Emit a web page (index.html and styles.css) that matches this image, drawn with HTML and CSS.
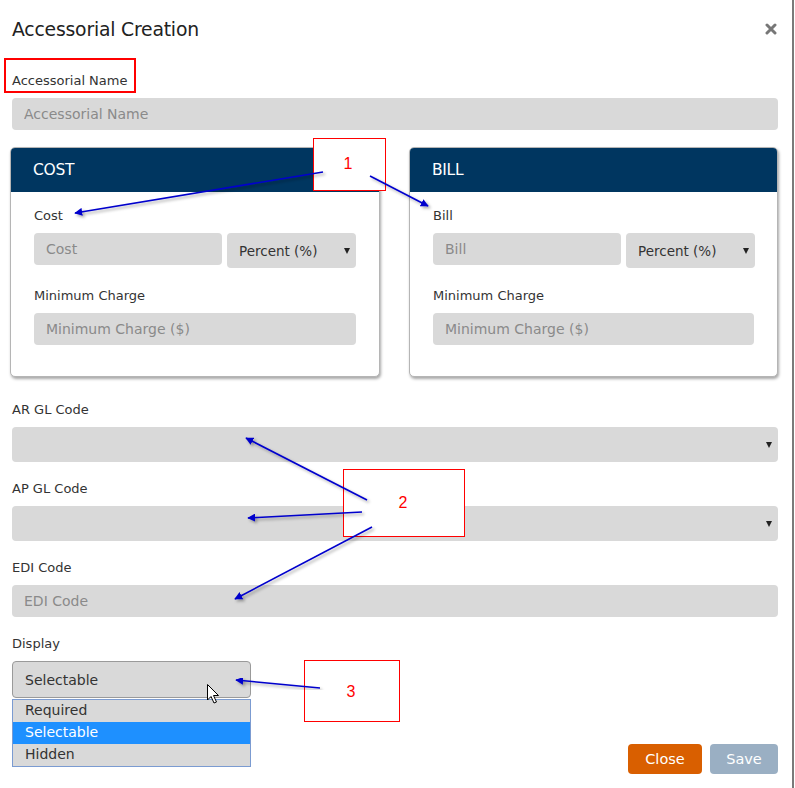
FILE: index.html
```html
<!DOCTYPE html>
<html lang="en">
<head>
  <meta charset="UTF-8" />
  <meta name="viewport" content="width=device-width, initial-scale=1.0"/>
  <title>Accessorial Creation</title>
  <link rel="stylesheet" href="styles.css">
</head>
<body>

  <div class="modal">
    <div class="modal-header">
      <h2 class="modal-title">Accessorial Creation</h2>
      <svg class="close-x" width="12" height="12" viewBox="0 0 12 12">
        <path d="M2 2 L10 10 M10 2 L2 10" stroke="#777" stroke-width="3" stroke-linecap="round"/>
      </svg>
    </div>

    <label class="label">Accessorial Name</label>
    <input class="input" type="text" placeholder="Accessorial Name">

    <!-- cost / bill panels -->
    <div class="panels">
      <div class="panel">
        <div class="panel-head">COST</div>
        <div class="panel-body">
          <label class="label">Cost</label>
          <div class="pair">
            <input class="input" type="text" placeholder="Cost">
            <div class="select small">Percent (%)</div>
          </div>
          <label class="label gap">Minimum Charge</label>
          <input class="input" type="text" placeholder="Minimum Charge ($)">
        </div>
      </div>
      <div class="panel">
        <div class="panel-head">BILL</div>
        <div class="panel-body">
          <label class="label">Bill</label>
          <div class="pair">
            <input class="input" type="text" placeholder="Bill">
            <div class="select small">Percent (%)</div>
          </div>
          <label class="label gap">Minimum Charge</label>
          <input class="input" type="text" placeholder="Minimum Charge ($)">
        </div>
      </div>
    </div>

    <label class="label first">AR GL Code</label>
    <div class="select"></div>

    <label class="label gap">AP GL Code</label>
    <div class="select"></div>

    <label class="label gap">EDI Code</label>
    <input class="input" type="text" placeholder="EDI Code">

    <label class="label gap">Display</label>
    <div class="display-wrap">
      <div class="display-select">Selectable</div>
      <ul class="dropdown">
        <li>Required</li>
        <li class="active">Selectable</li>
        <li>Hidden</li>
      </ul>
    </div>

    <div class="footer">
      <button class="btn btn-close">Close</button>
      <button class="btn btn-save">Save</button>
    </div>

    <!-- annotation layer drawn over the screenshot -->
    <svg class="notes" width="795" height="788" viewBox="0 0 795 788">
      <defs>
        <marker id="head" viewBox="0 0 10 10" refX="9" refY="5" markerWidth="5" markerHeight="5" orient="auto">
          <path d="M0 0 L10 5 L0 10 z" fill="#0000cc"/>
        </marker>
        <filter id="shade" x="-20%" y="-20%" width="140%" height="140%">
          <feDropShadow dx="2" dy="2" stdDeviation="1.5" flood-color="#000" flood-opacity="0.35"/>
        </filter>
      </defs>

      <rect x="5" y="59" width="130" height="33" fill="none" stroke="#f00" stroke-width="2"/>

      <rect x="313.5" y="138.5" width="72" height="52" fill="#fff" stroke="#f00"/>
      <text x="348" y="169" class="num">1</text>
      <g stroke="#0000cc" stroke-width="1.6" fill="none" marker-end="url(#head)" filter="url(#shade)">
        <line x1="323" y1="172" x2="75" y2="213"/>
        <line x1="370" y1="176" x2="428" y2="206"/>
      </g>

      <rect x="343.5" y="469.5" width="121" height="67" fill="#fff" stroke="#f00"/>
      <text x="403" y="508" class="num">2</text>
      <g stroke="#0000cc" stroke-width="1.6" fill="none" marker-end="url(#head)" filter="url(#shade)">
        <line x1="367" y1="500" x2="246" y2="438"/>
        <line x1="362" y1="512" x2="248" y2="518"/>
        <line x1="372" y1="527" x2="235" y2="599"/>
      </g>

      <rect x="304.5" y="660.5" width="95" height="61" fill="#fff" stroke="#f00"/>
      <text x="351" y="697" class="num">3</text>
      <g stroke="#0000cc" stroke-width="1.6" fill="none" marker-end="url(#head)" filter="url(#shade)">
        <line x1="320" y1="688" x2="236" y2="680"/>
      </g>

      <!-- mouse pointer -->
      <path d="M207.5 684.5 L207.5 700 L211 696.5 L214 703 L216.5 702 L213.5 695.5 L218.5 695.5 Z" fill="#fff" stroke="#000" stroke-width="1"/>
    </svg>
  </div>

</body>
</html>
```

FILE: styles.css
```css
body {
  margin: 0;
  background: #fff;
  font-family: 'DejaVu Sans', 'Open Sans', sans-serif;
  color: #333;
}

.modal {
  position: relative;
  width: 794px;
  height: 788px;
  box-sizing: border-box;
  padding: 0 14px 0 12px;
  border-right: 2px solid #7a7a7a;
  overflow: hidden;
}

.modal-header {
  display: flex;
  justify-content: space-between;
  align-items: center;
  padding-top: 17px;
  height: 24px;
}

.modal-title {
  margin: 0;
  font-size: 18.8px;
  font-weight: normal;
  color: #222;
  letter-spacing: -0.2px;
}

.close-x {
  margin-right: 1px;
}

.label {
  display: block;
  font-size: 13px;
  line-height: 18px;
  color: #333;
  margin: 31px 0 8px;
}

.label.gap {
  margin-top: 18px;
}

.label.first {
  margin-top: 24px;
}

.input {
  display: block;
  width: 100%;
  height: 32px;
  box-sizing: border-box;
  border: none;
  border-radius: 4px;
  background: #d9d9d9;
  padding: 0 12px;
  font-family: inherit;
  font-size: 14px;
  color: #333;
  outline: none;
}

.input::placeholder {
  color: #8a8a8a;
}

.select {
  position: relative;
  height: 35px;
  box-sizing: border-box;
  border-radius: 4px;
  background: #d9d9d9;
  padding: 0 20px 0 12px;
  font-size: 13.5px;
  line-height: 37px;
  color: #333;
}

.select::after {
  content: "";
  position: absolute;
  right: 6px;
  top: 15px;
  border-left: 3.5px solid transparent;
  border-right: 3.5px solid transparent;
  border-top: 6px solid #222;
}

.panels {
  display: grid;
  grid-template-columns: 370px 369px;
  gap: 29px;
  margin: 17px 0 0 -2px;
}

.panel {
  border: 1px solid #b5b5b5;
  border-radius: 5px;
  background: #fff;
  box-shadow: 1px 2px 3px rgba(0, 0, 0, 0.35);
  overflow: hidden;
  height: 228px;
}

.panel-head {
  background: #003660;
  color: #fff;
  height: 44px;
  line-height: 44px;
  padding-left: 22px;
  font-size: 15.5px;
  letter-spacing: -0.3px;
}

.panel-body {
  padding: 6px 23px 0;
}

.panel-body .label:first-child {
  margin-top: 9px;
  margin-bottom: 8px;
}

.panel-body .label.gap {
  margin-top: 19px;
  margin-bottom: 8px;
}

.pair {
  display: grid;
  grid-template-columns: 188px 129px;
  gap: 5px;
  align-items: start;
}

.display-wrap {
  position: relative;
  width: 239px;
}

.display-select {
  height: 37px;
  box-sizing: border-box;
  border: 1px solid #9a9a9a;
  border-radius: 4px;
  background: #d9d9d9;
  padding-left: 12px;
  font-size: 14px;
  line-height: 37px;
  color: #333;
}

.dropdown {
  position: absolute;
  top: 38px;
  left: 0;
  width: 239px;
  box-sizing: border-box;
  margin: 0;
  padding: 0;
  list-style: none;
  border: 1px solid #7b9bd1;
  background: #d9d9d9;
  font-size: 14px;
}

.dropdown li {
  height: 22px;
  line-height: 21px;
  padding-left: 12px;
  color: #333;
}

.dropdown li.active {
  background: #1e90ff;
  color: #fff;
}

.footer {
  display: flex;
  justify-content: flex-end;
  gap: 8px;
  margin-top: 46px;
}

.btn {
  height: 30px;
  border: none;
  border-radius: 4px;
  color: #fff;
  font-family: inherit;
  font-size: 14.5px;
}

.btn-close {
  width: 74px;
  background: #d95f00;
}

.btn-save {
  width: 68px;
  background: #9aafc3;
}

.notes {
  position: absolute;
  left: 0;
  top: 0;
  pointer-events: none;
}

.num {
  fill: #f00;
  font-family: 'Liberation Sans', sans-serif;
  font-size: 16px;
  text-anchor: middle;
}
```
